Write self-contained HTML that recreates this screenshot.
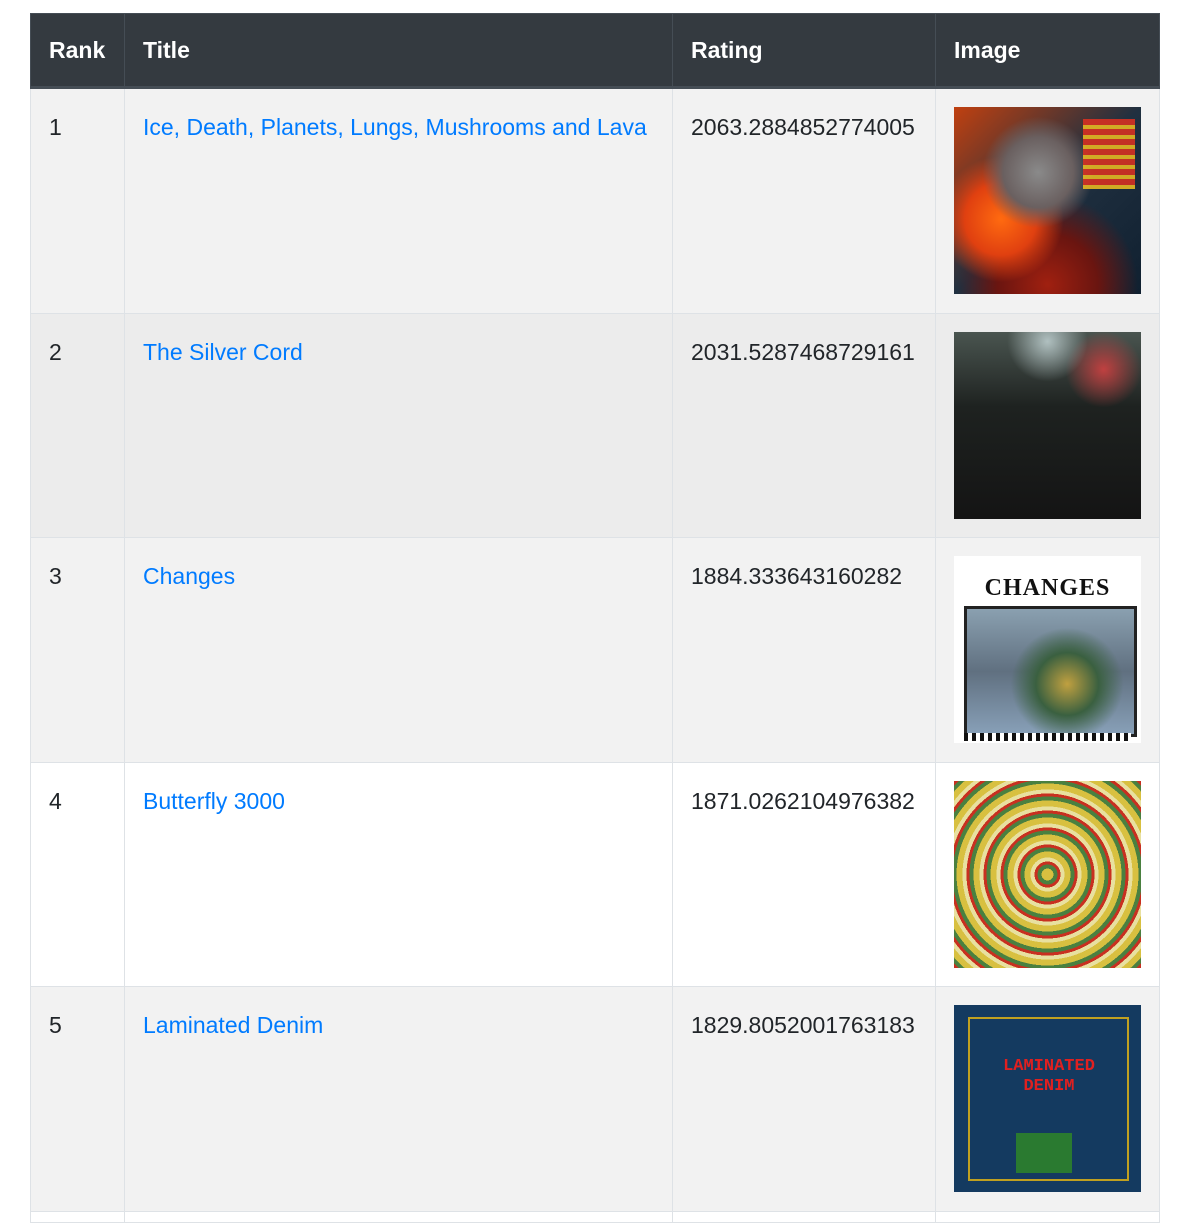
<!DOCTYPE html>
<html><head><style>
body{margin:0;background:#fff;font-family:"Segoe UI","Liberation Sans",sans-serif;overflow:hidden;height:1222px;}
table{position:absolute;left:30px;top:13px;width:1130px;border-collapse:collapse;font-size:23px;color:#212529;}
th{background:#343a40;color:#fff;text-align:left;font-weight:bold;height:72px;padding:0 18px;border:1px solid #454d55;border-bottom:3px solid #454d55;}
td{vertical-align:top;padding:25px 18px 0 18px;border:1px solid #dee2e6;height:198.6px;}
td.e{height:10px;padding:0;}
a{color:#007bff;text-decoration:none;}
.img{width:187px;height:187px;margin-top:-7px;position:relative;overflow:hidden;}
</style></head><body>
<table>
<tr><th style="width:57px">Rank</th><th style="width:511px">Title</th><th style="width:226px">Rating</th><th>Image</th></tr>
<tr style="background:#f2f2f2"><td>1</td><td><a>Ice, Death, Planets, Lungs, Mushrooms and Lava</a></td><td>2063.2884852774005</td><td><div class="img" style="background:radial-gradient(circle at 45% 35%,#8a8a8a 0,#6a6060 22%,transparent 35%),radial-gradient(circle at 25% 60%,#ff6a10 0,#e04010 20%,transparent 35%),radial-gradient(circle at 50% 95%,#a02010 0,#6a1510 25%,transparent 45%),linear-gradient(135deg,#c04010,#203040 50%,#102030);"><div style="position:absolute;right:6px;top:12px;width:52px;height:70px;background:repeating-linear-gradient(#e03020 0 6px,#f0c020 6px 10px);opacity:.85"></div></div></td></tr>
<tr style="background:#ececec"><td>2</td><td><a>The Silver Cord</a></td><td>2031.5287468729161</td><td><div class="img" style="background:radial-gradient(circle at 50% 5%,#b0c0c0 0,transparent 20%),radial-gradient(circle at 80% 20%,#c04040 0,transparent 18%),linear-gradient(#4a5550,#1e2220 40%,#141414);"></div></td></tr>
<tr style="background:#f2f2f2"><td>3</td><td><a>Changes</a></td><td>1884.333643160282</td><td><div class="img" style="background:#fff;"><div style="position:absolute;left:0;right:0;top:19px;text-align:center;font:bold 24px 'Liberation Serif',serif;color:#111;letter-spacing:1px">CHANGES</div><div style="position:absolute;left:10px;top:50px;width:167px;height:125px;background:radial-gradient(circle at 60% 60%,#c0a040 0,#3a6040 25%,transparent 45%),linear-gradient(#8aa0b0,#607080 50%,#88a0b8);border:3px solid #222"></div><div style="position:absolute;left:10px;right:10px;bottom:2px;height:8px;background:repeating-linear-gradient(90deg,#111 0 4px,#fff 4px 8px)"></div></div></td></tr>
<tr style="background:#fff"><td>4</td><td><a>Butterfly 3000</a></td><td>1871.0262104976382</td><td><div class="img" style="background:repeating-radial-gradient(circle at 50% 50%,#d8c040 0 6px,#4a8040 6px 10px,#c83020 10px 13px,#e8e0a0 13px 17px);"></div></td></tr>
<tr style="background:#f2f2f2"><td>5</td><td><a>Laminated Denim</a></td><td>1829.8052001763183</td><td><div class="img" style="background:#143a60;"><div style="position:absolute;left:14px;top:12px;width:157px;height:160px;border:2px solid #c0a020"></div><div style="position:absolute;left:30px;top:52px;width:130px;text-align:center;color:#e02020;font:bold 17px 'Liberation Mono',monospace;line-height:20px">LAMINATED<br>DENIM</div><div style="position:absolute;left:62px;top:128px;width:56px;height:40px;background:#2a7a30"></div></div></td></tr>
<tr style="background:#fff"><td class="e"></td><td class="e"></td><td class="e"></td><td class="e"></td></tr>
</table>
</body></html>
